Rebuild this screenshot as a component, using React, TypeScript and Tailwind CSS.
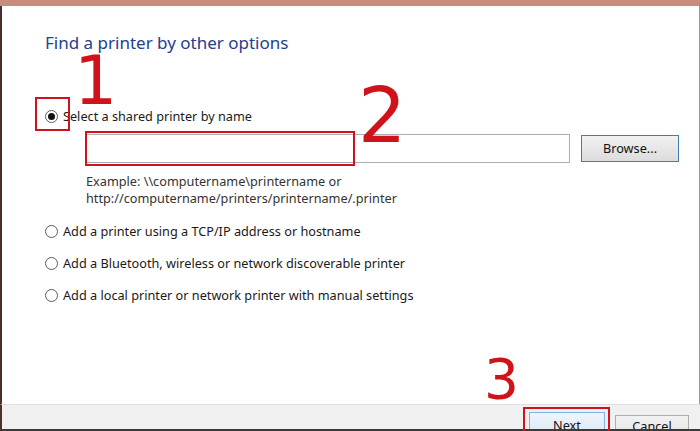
import React from 'react';

const FONT = { fontFamily: '"Noto Sans", "Open Sans", sans-serif' };

function Radio({ checked = false }: { checked?: boolean }) {
  return (
    <span className="flex h-[13px] w-[13px] shrink-0 items-center justify-center rounded-full border border-[#5c5c5c] bg-white">
      {checked && <span className="h-[7px] w-[7px] rounded-full bg-[#111]" />}
    </span>
  );
}

function Option({ label, checked }: { label: string; checked?: boolean }) {
  return (
    <div className="flex h-[16px] items-center gap-[5px] text-[12.7px] leading-[16px] text-[#1a1a1a]">
      <Radio checked={checked} />
      <span>{label}</span>
    </div>
  );
}

export default function App() {
  return (
    <div className="relative flex h-[431px] w-[700px] flex-col overflow-hidden bg-white" style={FONT}>
      {/* window top edge */}
      <div className="h-[6px] shrink-0 bg-[#c98a7f]" />

      <div className="flex flex-1 flex-col border-l-2 border-r border-l-[#4d302c] border-r-[#9a9a9a] pl-[43px]">
        <h1 className="mt-[25px] text-[17px] font-normal leading-[24px] text-[#23408e]">
          Find a printer by other options
        </h1>

        <div className="mt-[53px]">
          <Option label="Select a shared printer by name" checked />
        </div>

        <div className="mt-[10px] flex items-center pl-[40px]">
          <div className="h-[29px] w-[485px] border border-[#abadb3] bg-white" />
          <button className="ml-[11px] h-[27px] w-[98px] border border-[#3c7fb1] bg-gradient-to-b from-[#f2f2f2] to-[#dcdcdc] text-[12.7px] text-[#111]">
            Browse...
          </button>
        </div>

        <div className="mt-[10px] pl-[41px] text-[12.7px] leading-[17px] text-[#333]">
          <div>Example: \\computername\printername or</div>
          <div>http://computername/printers/printername/.printer</div>
        </div>

        <div className="mt-[16px] flex flex-col gap-[16px]">
          <Option label="Add a printer using a TCP/IP address or hostname" />
          <Option label="Add a Bluetooth, wireless or network discoverable printer" />
          <Option label="Add a local printer or network printer with manual settings" />
        </div>
      </div>

      {/* footer */}
      <div className="flex h-[27px] shrink-0 items-start justify-end gap-[10px] overflow-hidden border-t border-b-2 border-l-2 border-t-[#dfdfdf] border-b-[#3a3a3a] border-l-[#4d302c] bg-[#f0f0f0] pr-[11px] pt-[7px]">
        <button className="h-[24px] w-[76px] border border-[#7eb4ea] bg-gradient-to-b from-[#eef5fc] to-[#dbe9f7] pt-[3px] text-[12.7px] text-[#111]">
          Next
        </button>
        <button className="mt-[3px] h-[24px] w-[74px] border border-[#adadad] bg-gradient-to-b from-[#f2f2f2] to-[#e2e2e2] text-[12.7px] text-[#111]">
          Cancel
        </button>
      </div>

      {/* red annotations */}
      <div className="absolute left-[35px] top-[97px] h-[34px] w-[35px] border-2 border-[#d0121b]" />
      <div className="absolute left-[85px] top-[131px] h-[35px] w-[270px] border-2 border-[#d0121b]" />
      <div className="absolute left-[523px] top-[407px] h-[30px] w-[87px] border-2 border-[#d0121b]" />

      <span className="absolute left-[74px] top-[44px] text-[68px] leading-[74px] text-[#d0121b]" style={{ fontFamily: '"DejaVu Sans", sans-serif' }}>1</span>
      <span className="absolute left-[358px] top-[75px] text-[76px] leading-[82px] text-[#d0121b]" style={{ fontFamily: '"DejaVu Sans", sans-serif' }}>2</span>
      <span className="absolute left-[484px] top-[349px] text-[55px] leading-[60px] text-[#d0121b]" style={{ fontFamily: '"DejaVu Sans", sans-serif' }}>3</span>
    </div>
  );
}
